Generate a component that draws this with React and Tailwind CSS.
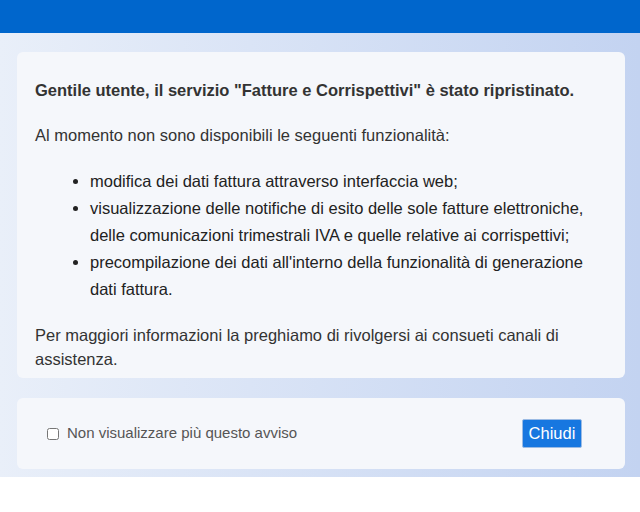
import React, { useState } from "react";

export default function App() {
  const [hide, setHide] = useState(false);

  return (
    <div className="w-[640px] h-[512px] bg-white font-['Liberation_Sans',Arial,sans-serif]">
      <div className="h-[33px] bg-[#0066cc]" />
      <div className="bg-gradient-to-r from-[#e9eff9] to-[#c3d3f1] pl-[17px] pr-[15px] pt-[19px] pb-[8px]">
        <div className="bg-[#f5f7fb] rounded-[6px] px-[18px] pt-[26px] pb-[7px] text-[16.5px] text-[#333]">
          <p className="font-bold leading-[24px]">
            Gentile utente, il servizio "Fatture e Corrispettivi" è stato ripristinato.
          </p>
          <p className="mt-[21px] leading-[24px]">
            Al momento non sono disponibili le seguenti funzionalità:
          </p>
          <ul className="mt-[21px] ml-[55px] list-disc leading-[27px] text-[#222]">
            <li>modifica dei dati fattura attraverso interfaccia web;</li>
            <li>
              visualizzazione delle notifiche di esito delle sole fatture elettroniche,
              delle comunicazioni trimestrali IVA e quelle relative ai corrispettivi;
            </li>
            <li>
              precompilazione dei dati all'interno della funzionalità di generazione
              dati fattura.
            </li>
          </ul>
          <p className="mt-[20px] leading-[24px]">
            Per maggiori informazioni la preghiamo di rivolgersi ai consueti canali di
            assistenza.
          </p>
        </div>
        <div className="mt-[20px] bg-[#f5f7fb] rounded-[6px] h-[71px] flex items-center justify-between pl-[30px] pr-[43px]">
          <label className="flex items-center gap-[8px] text-[15px] text-[#555]">
            <input
              type="checkbox"
              checked={hide}
              onChange={(e) => setHide(e.target.checked)}
              className="w-[12px] h-[12px] m-0"
            />
            Non visualizzare più questo avviso
          </label>
          <button className="w-[60px] h-[29px] bg-[#1777e0] text-white text-[16.5px] rounded-[2px] border border-[#9bbbe4]">
            Chiudi
          </button>
        </div>
      </div>
    </div>
  );
}
